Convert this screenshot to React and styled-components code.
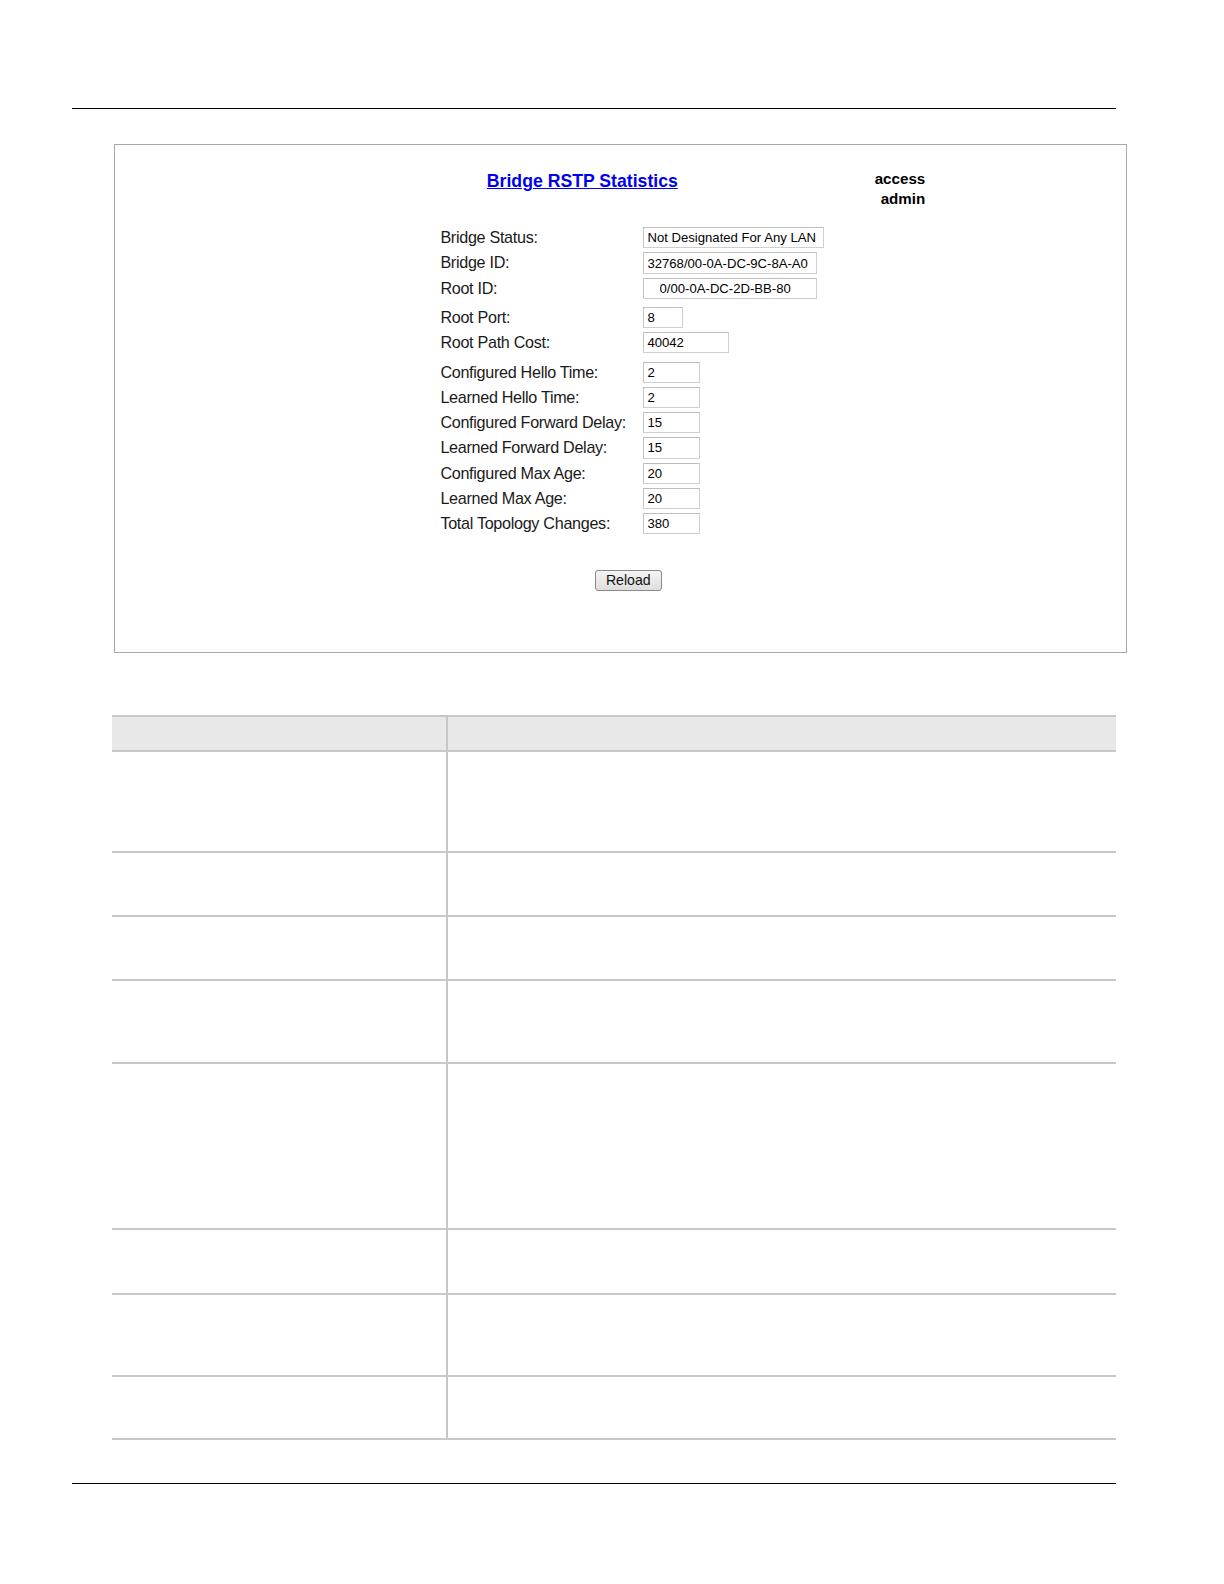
import React from 'react'
import styled, { createGlobalStyle } from 'styled-components'

const Global = createGlobalStyle`
  html, body { margin: 0; padding: 0; background: #fff; }
  body { font-family: "Liberation Sans", Arial, sans-serif; }
`

const Page = styled.div`
  padding: 107px 0 20px;
  zoom: 1.0101;
`

const Rule = styled.div`
  margin-left: 71px;
  width: 1034px;
  height: 1px;
  background: #000;
  margin-top: ${p => p.$top || 0}px;
`

const Panel = styled.div`
  margin: 35px 0 0 113px;
  width: 1003px;
  height: 503px;
  box-sizing: border-box;
  border: 1px solid #a8a8a8;
  padding-top: 24px;
`

const HeaderRow = styled.div`
  display: flex;
  justify-content: space-between;
  align-items: flex-start;
  width: 802px;
  padding-left: 368px;
  box-sizing: border-box;
`

const Title = styled.a`
  font-size: 17.5px;
  font-weight: bold;
  line-height: 22px;
  color: #0000ee;
  text-decoration: underline;
  cursor: pointer;
`

const Access = styled.div`
  text-align: right;
  font-size: 15px;
  font-weight: bold;
  line-height: 20px;
  color: #000;
  margin-top: -1px;
`

const Form = styled.div`
  display: grid;
  grid-template-columns: 201px auto;
  margin: 16px 0 0 322px;
  align-items: center;
`

const Label = styled.div`
  font-size: 16px;
  letter-spacing: -0.3px;
  color: #1a1a1a;
  height: 25px;
  line-height: 25px;
  margin-top: ${p => p.$gap || 0}px;
`

const Field = styled.input`
  width: ${p => p.$w}px;
  height: 21px;
  box-sizing: border-box;
  border: 1px solid #cfcfcf;
  border-top-color: #bdbdbd;
  border-left-color: #c4c4c4;
  padding: 0 0 0 ${p => p.$pad || 3}px;
  margin: ${p => p.$gap || 0}px 0 0 0;
  font-family: "Liberation Sans", Arial, sans-serif;
  font-size: 13px;
  color: #000;
  background: #fff;
  outline: none;
  justify-self: start;
`

const Reload = styled.button`
  display: block;
  margin: 33px 0 0 475px;
  width: 66px;
  height: 21px;
  padding: 0;
  font-family: "Liberation Sans", Arial, sans-serif;
  font-size: 14px;
  color: #111;
  border: 1px solid #8a8a8a;
  border-radius: 3px;
  background: linear-gradient(#f4f4f4, #dedede);
`

const Table = styled.div`
  margin: 62px 0 0 111px;
  width: 994px;
`

const Row = styled.div`
  display: grid;
  grid-template-columns: 333px 1fr;
  height: ${p => p.$h}px;
  background: ${p => (p.$head ? '#e8e8e8' : '#fff')};
  border-top: ${p => (p.$head ? '2px solid #c8c8c8' : 'none')};
  border-bottom: 2px solid #c8c8c8;
  box-sizing: border-box;
`

const Cell = styled.div`
  border-right: ${p => (p.$first ? '2px solid #c6c6c6' : 'none')};
`

const fields = [
  ['Bridge Status:', 'Not Designated For Any LAN', 179, 0],
  ['Bridge ID:', '32768/00-0A-DC-9C-8A-A0', 172, 0],
  ['Root ID:', '0/00-0A-DC-2D-BB-80', 172, 0, 15],
  ['Root Port:', '8', 39, 4],
  ['Root Path Cost:', '40042', 85, 0],
  ['Configured Hello Time:', '2', 56, 4],
  ['Learned Hello Time:', '2', 56, 0],
  ['Configured Forward Delay:', '15', 56, 0],
  ['Learned Forward Delay:', '15', 56, 0],
  ['Configured Max Age:', '20', 56, 0],
  ['Learned Max Age:', '20', 56, 0],
  ['Total Topology Changes:', '380', 56, 0],
]

const rows = [100, 63, 63, 82, 165, 64, 81, 63]

export default function App() {
  return (
    <Page>
      <Global />
      <Rule />
      <Panel>
        <HeaderRow>
          <Title>Bridge RSTP Statistics</Title>
          <Access>
            access
            <br />
            admin
          </Access>
        </HeaderRow>
        <Form>
          {fields.map(([label, value, w, gap, pad]) => (
            <React.Fragment key={label}>
              <Label $gap={gap}>{label}</Label>
              <Field readOnly value={value} $w={w} $gap={gap} $pad={pad} />
            </React.Fragment>
          ))}
        </Form>
        <Reload>Reload</Reload>
      </Panel>
      <Table>
        <Row $head $h={37}>
          <Cell $first />
          <Cell />
        </Row>
        {rows.map((h, i) => (
          <Row key={i} $h={h}>
            <Cell $first />
            <Cell />
          </Row>
        ))}
      </Table>
      <Rule $top={42} />
    </Page>
  )
}
